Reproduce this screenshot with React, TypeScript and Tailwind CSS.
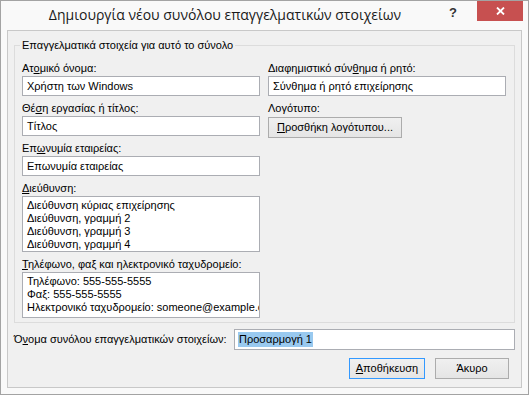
import React from "react"

const body = { fontFamily: '"Liberation Sans", "Noto Sans", sans-serif' }

function Label({ children, className = "" }: { children: React.ReactNode; className?: string }) {
  return <div className={"h-[16px] leading-[16px] text-[11px] text-black whitespace-nowrap " + className}>{children}</div>
}

function Field({ value }: { value: string }) {
  return (
    <div className="h-[20px] border border-[#abadb3] bg-white pl-[4px] leading-[18px] text-[11px] text-black whitespace-nowrap overflow-hidden">
      {value}
    </div>
  )
}

function Box({ lines, h }: { lines: string[]; h: string }) {
  return (
    <div className={"border border-[#abadb3] bg-white pl-[4px] pt-[2px] text-[11px] leading-[13px] text-black overflow-hidden " + h}>
      {lines.map((l) => (
        <div key={l} className="whitespace-nowrap">{l}</div>
      ))}
    </div>
  )
}

export default function App() {
  return (
    <div className="w-[529px] h-[395px] border border-[#a3a3a3] bg-[#f9f9f9] flex flex-col" style={body}>
      <div className="h-[29px] flex">
        <div
          className="flex-1 pt-[3px] pl-[12px] text-center text-[14px] leading-[22px] text-[#1a1a1a]"
          style={{ fontFamily: '"Open Sans", "Noto Sans", sans-serif' }}
        >
          Δημιουργία νέου συνόλου επαγγελματικών στοιχείων
        </div>
        <div className="w-[40px] flex justify-start pl-[12px] pt-[2px] text-[13px] font-bold text-[#333]">?</div>
        <div className="w-[46px] h-[20px] mr-[5px] bg-[#c75050] flex items-center justify-center">
          <svg width="9" height="8" viewBox="0 0 9 8">
            <path d="M1 0.5 L8 7.5 M8 0.5 L1 7.5" stroke="#fff" strokeWidth="1.8" />
          </svg>
        </div>
      </div>

      <div className="mx-[6px] h-[358px] border border-[#c8c8c8] bg-[#f0f0f0] px-[6px] pt-[6px] flex flex-col">
        <fieldset className="h-[286px] border border-[#dcdcdc] pl-[5px] pr-[8px] pb-[4px]">
          <legend className="px-[2px] text-[11px] leading-[16px] text-black">
            Επαγγελματικά στοιχεία για αυτό το σύνολο
          </legend>
          <div className="pl-[2px] pt-[7px] grid grid-cols-[238px_238px] gap-x-[8px]">
            <div className="flex flex-col">
              <Label>Ατ<u>ο</u>μικό όνομα:</Label>
              <Field value="Χρήστη των Windows" />
              <Label className="mt-[4px]">Θέ<u>σ</u>η εργασίας ή τίτλος:</Label>
              <Field value="Τίτλος" />
              <Label className="mt-[4px]">Επ<u>ω</u>νυμία εταιρείας:</Label>
              <Field value="Επωνυμία εταιρείας" />
              <Label className="mt-[4px]"><u>Δ</u>ιεύθυνση:</Label>
              <Box
                h="h-[56px]"
                lines={["Διεύθυνση κύριας επιχείρησης", "Διεύθυνση, γραμμή 2", "Διεύθυνση, γραμμή 3", "Διεύθυνση, γραμμή 4"]}
              />
              <Label className="mt-[4px]"><u>Τ</u>ηλέφωνο, φαξ και ηλεκτρονικό ταχυδρομείο:</Label>
              <Box
                h="h-[46px]"
                lines={["Τηλέφωνο: 555-555-5555", "Φαξ: 555-555-5555", "Ηλεκτρονικό ταχυδρομείο: someone@example.com"]}
              />
            </div>
            <div className="flex flex-col items-start">
              <Label>Διαφημιστικό σύν<u>θ</u>ημα ή ρητό:</Label>
              <div className="w-full">
                <Field value="Σύνθημα ή ρητό επιχείρησης" />
              </div>
              <Label className="mt-[4px]">Λογότυπο:</Label>
              <button className="mt-[1px] h-[21px] w-[134px] border border-[#acacac] bg-gradient-to-b from-[#f0f0f0] to-[#e5e5e5] text-[11px] text-black">
                <u>Π</u>ροσθήκη λογότυπου...
              </button>
            </div>
          </div>
        </fieldset>

        <div className="mt-[6px] flex items-center">
          <div className="w-[220px] text-[11px] text-black whitespace-nowrap">
            Ό<u>ν</u>ομα συνόλου επαγγελματικών στοιχείων:
          </div>
          <div className="flex-1 h-[21px] border border-[#abadb3] bg-white pl-[3px] flex items-center">
            <span className="bg-[#99c9ef] px-[1px] text-[11px] leading-[15px] text-black">Προσαρμογή 1</span>
          </div>
        </div>

        <div className="mt-[8px] pr-[6px] flex justify-end gap-[10px]">
          <button className="h-[21px] w-[76px] border border-[#3399ff] bg-gradient-to-b from-[#f0f0f0] to-[#e5e5e5] text-[11px] text-black">
            <u>Α</u>ποθήκευση
          </button>
          <button className="h-[21px] w-[74px] border border-[#acacac] bg-gradient-to-b from-[#f0f0f0] to-[#e5e5e5] text-[11px] text-black">
            Άκυρο
          </button>
        </div>
      </div>
    </div>
  )
}
